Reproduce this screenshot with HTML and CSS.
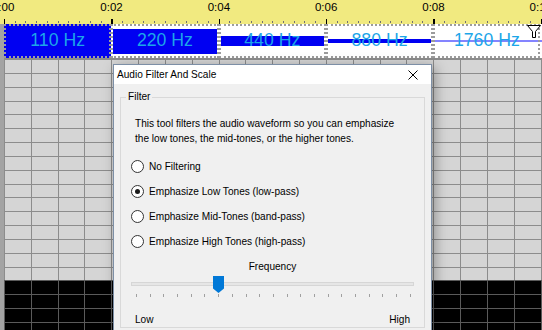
FILE: index.html
```html
<!DOCTYPE html>
<html>
<head>
<meta charset="utf-8">
<link rel="stylesheet" href="styles.css">
</head>
<body>
<div class="app">
  <div class="ruler">
    <div class="labels">
      <span class="lbl first">0:00</span>
      <span class="lbl">0:02</span>
      <span class="lbl">0:04</span>
      <span class="lbl">0:06</span>
      <span class="lbl">0:08</span>
      <span class="lbl">0:10</span>
    </div>
    <div class="ticks"></div>
  </div>
  <div class="track">
    <div class="clip full"><span class="name">110 Hz</span></div>
    <div class="clip"><div class="wave w2"></div><span class="name">220 Hz</span></div>
    <div class="clip"><div class="wave w3"></div><span class="name">440 Hz</span></div>
    <div class="clip"><div class="wave w4"></div><span class="name">880 Hz</span></div>
    <div class="clip"><div class="wave w5"></div><span class="name">1760 Hz</span></div>
    <div class="tail"><div class="wave w5"></div></div>
    <svg class="funnel" width="14" height="13" viewBox="0 0 14 13"><path d="M0.5 0.5 H13.5 L8.5 6.5 V12.5 H5.5 V6.5 Z" fill="#fff" stroke="#000" stroke-width="1"/></svg>
  </div>
  <div class="grid">
    <div class="rows light"></div>
    <div class="rows dark"></div>
  </div>

  <div class="dialog">
    <div class="titlebar">
      <span class="title">Audio Filter And Scale</span>
      <svg class="close" width="10" height="10" viewBox="0 0 10 10"><path d="M0.5 0.5 L9.5 9.5 M9.5 0.5 L0.5 9.5" stroke="#000" stroke-width="1"/></svg>
    </div>
    <div class="dbody">
      <fieldset class="group">
        <legend>Filter</legend>
        <div class="gin">
          <p class="desc">This tool filters the audio waveform so you can emphasize<br>the low tones, the mid-tones, or the higher tones.</p>
          <div class="radios">
            <div class="radio"><span class="circ"></span><span>No Filtering</span></div>
            <div class="radio on"><span class="circ"></span><span>Emphasize Low Tones (low-pass)</span></div>
            <div class="radio"><span class="circ"></span><span>Emphasize Mid-Tones (band-pass)</span></div>
            <div class="radio"><span class="circ"></span><span>Emphasize High Tones (high-pass)</span></div>
          </div>
          <div class="freq">Frequency</div>
          <div class="slider">
            <div class="strack"></div>
            <svg class="thumb" width="11" height="17" viewBox="0 0 11 17"><path d="M0 0 H11 V12.5 L5.5 17 L0 12.5 Z" fill="#0078d7"/></svg>
            <div class="sticks">
              <i></i><i></i><i></i><i></i><i></i><i></i><i></i><i></i><i></i><i></i><i></i>
              <i></i><i></i><i></i><i></i><i></i><i></i><i></i><i></i><i></i><i></i>
            </div>
          </div>
          <div class="ends"><span>Low</span><span>High</span></div>
        </div>
      </fieldset>
    </div>
  </div>
</div>
</body>
</html>
```

FILE: styles.css
```css
* { box-sizing: border-box; }
html, body { margin: 0; padding: 0; }
body {
  width: 542px;
  height: 330px;
  overflow: hidden;
  font-family: "Liberation Sans", Arial, sans-serif;
  background: #d5d5d5;
}
.app {
  position: relative;
  width: 542px;
  height: 330px;
  overflow: hidden;
  display: flex;
  flex-direction: column;
}

/* ruler */
.ruler {
  height: 24px;
  background: #f1ea80;
  overflow: hidden;
  flex: none;
}
.labels {
  display: flex;
  margin-left: -51.6px;
  height: 14.5px;
}
.lbl {
  flex: none;
  width: 107.3px;
  text-align: center;
  font-size: 11.5px;
  line-height: 14.5px;
  color: #000;
  white-space: nowrap;
}
.lbl.first { width: 109.5px; }
.ticks {
  margin-top: 4px;
  margin-left: 4px;
  height: 5px;
  background-image:
    repeating-linear-gradient(90deg, #000 0 1.5px, transparent 1.5px 107.3px),
    repeating-linear-gradient(90deg, #707070 0 1px, transparent 1px 10.73px);
  background-size: 100% 100%, 100% 2px;
  background-position: 0 0, 0 2px;
  background-repeat: no-repeat;
}

/* track */
.track {
  position: relative;
  height: 34px;
  flex: none;
  display: flex;
  background: #fff;
  border-left: 4px solid #a3a3a3;
}
.clip {
  flex: none;
  width: 107.3px;
  height: 34px;
  border: 2px dotted #9c9c9c;
  display: grid;
  align-items: center;
  justify-items: stretch;
}
.clip.full { background: #0000f2; }
.tail {
  flex: 1;
  display: grid;
  align-items: center;
  padding: 2px 0;
}
.wave { grid-area: 1 / 1; background: #0000f2; }
.w2 { height: 25px; }
.w3 { height: 10px; }
.w4 { height: 4px; }
.w5 { height: 2px; background: #8484ff; }
.name {
  grid-area: 1 / 1;
  justify-self: center;
  font-size: 17.7px;
  color: #1ca6e8;
  white-space: nowrap;
  margin-bottom: 1.5px;
}
.funnel {
  position: absolute;
  right: 1px;
  top: 1px;
}

/* grid */
.grid {
  flex: 1;
  display: flex;
  flex-direction: column;
  border-left: 4px solid #a3a3a3;
}
.rows.light {
  height: 222px;
  flex: none;
  background-color: #d5d5d5;
  background-image:
    repeating-linear-gradient(180deg, #8c8c8c 0 1px, transparent 1px 13.84px),
    repeating-linear-gradient(90deg, #8c8c8c 0 1px, transparent 1px 26.83px);
  background-position: 0 1px, 0 0;
}
.rows.dark {
  flex: 1;
  background-color: #000;
  background-image:
    repeating-linear-gradient(180deg, #5a5a5a 0 1px, transparent 1px 14px),
    repeating-linear-gradient(90deg, #5a5a5a 0 1px, transparent 1px 26.83px);
}

/* dialog */
.dialog {
  position: absolute;
  left: 113px;
  top: 64px;
  width: 319px;
  height: 266px;
  overflow: hidden;
  border: 1px solid #7d8fa6;
  border-bottom: 0;
  background: #f0f0f0;
  box-shadow: 3px 3px 12px rgba(0, 0, 0, 0.35);
  font-size: 10.1px;
  color: #000;
}
.titlebar {
  height: 19px;
  background: #fff;
  display: flex;
  align-items: center;
  justify-content: space-between;
  padding: 0 13px 0 3px;
}
.title { font-size: 10.1px; }
.close { display: block; }
.dbody {
  padding: 6px 6px 0 6px;
}
.group {
  margin: 0;
  padding: 0;
  border: 1px solid #d9d9d9;
  min-width: 0;
}
.group legend {
  margin-left: 5px;
  padding: 0 2px;
  font-size: 10.1px;
  line-height: 14px;
}
.gin { padding: 0 0 0 10px; }
.desc {
  margin: 12px 0 0 4px;
  line-height: 15.4px;
}
.radios {
  margin-top: 7px;
  display: flex;
  flex-direction: column;
}
.radio {
  height: 25px;
  display: flex;
  align-items: center;
  gap: 5px;
}
.circ {
  width: 13px;
  height: 13px;
  border: 1px solid #333;
  border-radius: 50%;
  background: #fff;
  display: flex;
  align-items: center;
  justify-content: center;
  flex: none;
}
.radio.on .circ::after {
  content: "";
  width: 5px;
  height: 5px;
  border-radius: 50%;
  background: #1a1a1a;
}
.freq {
  margin-top: 5px;
  line-height: 15px;
  text-align: center;
  padding-right: 10px;
}
.slider {
  position: relative;
  height: 26px;
  padding-top: 8px;
  padding-right: 10px;
}
.strack {
  height: 4px;
  background: #e6e6e6;
  border: 1px solid #d6d6d6;
}
.thumb {
  position: absolute;
  left: 82px;
  top: 2.5px;
  display: block;
}
.sticks {
  margin: 8.5px 3px 0 5px;
  height: 3px;
  display: flex;
  justify-content: space-between;
}
.sticks i {
  width: 1px;
  height: 3px;
  background: #a0a0a0;
}
.ends {
  margin-top: 12px;
  display: flex;
  justify-content: space-between;
  line-height: 15px;
  padding: 0 14px 0 4px;
}
```
